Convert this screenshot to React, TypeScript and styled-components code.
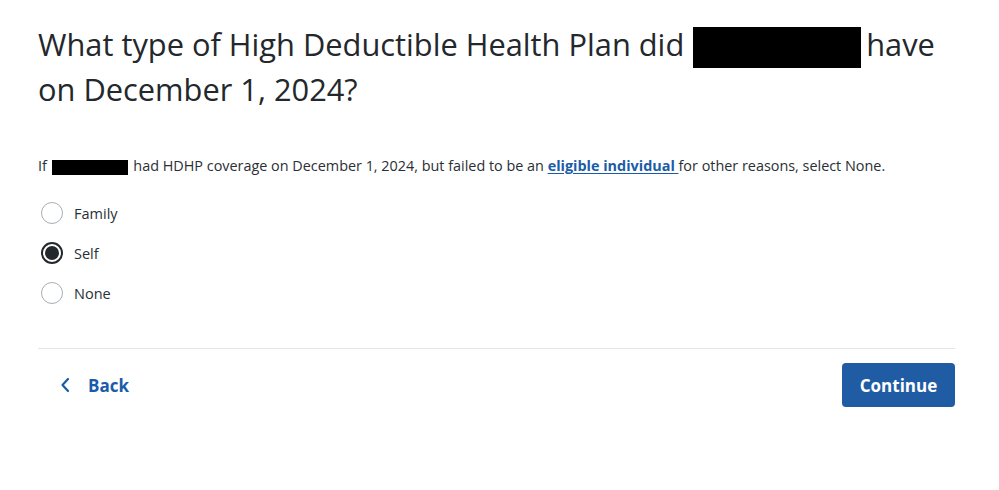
import styled, { createGlobalStyle } from "styled-components";

const GlobalStyle = createGlobalStyle`
  html, body {
    margin: 0;
    padding: 0;
    background: #ffffff;
  }
  body {
    font-family: "Open Sans", "Noto Sans", "Liberation Sans", sans-serif;
    color: #23282d;
  }
`;

const Page = styled.main`
  width: 999px;
  box-sizing: border-box;
  padding: 23px 44px 0 38px;
`;

const Title = styled.h1`
  margin: 0;
  font-size: 30.8px;
  font-weight: 400;
  line-height: 42px;
  color: #23282d;
`;

const Redact = styled.span<{ $w: number; $h: number; $inline?: boolean }>`
  display: inline-block;
  width: ${(p) => p.$w}px;
  height: ${(p) => p.$h}px;
  background: #000;
  vertical-align: middle;
  margin: ${(p) => (p.$inline ? "0 2px 0 1px" : "0 5px 0 9px")};
`;

const Intro = styled.p`
  margin: 46px 0 0;
  font-size: 14.4px;
  line-height: 20px;
  color: #2a2f35;

  a {
    color: #1a5ca8;
    font-weight: 700;
    text-decoration: underline;
    text-underline-offset: 2px;
  }
`;

const RadioList = styled.div`
  display: flex;
  flex-direction: column;
  gap: 18px;
  margin-top: 26px;
  padding-left: 3px;
`;

const RadioRow = styled.label`
  display: flex;
  align-items: center;
  gap: 11px;
  font-size: 14.5px;
  color: #2a2f35;
  height: 22px;
`;

const Circle = styled.span<{ $checked?: boolean }>`
  width: 22px;
  height: 22px;
  box-sizing: border-box;
  border-radius: 50%;
  border: ${(p) => (p.$checked ? "2px solid #23282d" : "1px solid #a9afb5")};
  display: flex;
  align-items: center;
  justify-content: center;
  &::after {
    content: "";
    display: ${(p) => (p.$checked ? "block" : "none")};
    width: 14px;
    height: 14px;
    border-radius: 50%;
    background: #23282d;
  }
`;

const Divider = styled.hr`
  border: none;
  border-top: 1px solid #e3e6ea;
  margin: 44px 0 0;
`;

const Footer = styled.div`
  display: flex;
  justify-content: space-between;
  align-items: center;
  margin-top: 14px;
`;

const BackButton = styled.button`
  display: flex;
  align-items: center;
  gap: 18px;
  background: none;
  border: none;
  padding: 0 0 0 22px;
  font-family: inherit;
  font-size: 17px;
  font-weight: 700;
  color: #1a5ca8;
  cursor: pointer;
`;

const PrimaryButton = styled.button`
  width: 113px;
  height: 44px;
  border: none;
  border-radius: 4px;
  background: #1f5ca3;
  color: #fff;
  font-family: inherit;
  font-size: 17px;
  font-weight: 700;
  cursor: pointer;
`;

const options = [
  { label: "Family", checked: false },
  { label: "Self", checked: true },
  { label: "None", checked: false },
];

export default function App() {
  return (
    <>
      <GlobalStyle />
      <Page>
        <Title>
          What type of High Deductible Health Plan did
          <Redact $w={168} $h={41} />
          have on December 1, 2024?
        </Title>
        <Intro>
          If <Redact $w={76} $h={15} $inline /> had HDHP coverage on December 1, 2024, but failed to be an{" "}
          <a href="#">eligible individual </a> for other reasons, select None.
        </Intro>
        <RadioList>
          {options.map((o) => (
            <RadioRow key={o.label}>
              <Circle $checked={o.checked} />
              {o.label}
            </RadioRow>
          ))}
        </RadioList>
        <Divider />
        <Footer>
          <BackButton>
            <svg width="10" height="16" viewBox="0 0 10 16" fill="none">
              <path d="M8 2L2.5 8L8 14" stroke="#1a5ca8" strokeWidth="2.2" strokeLinecap="round" strokeLinejoin="round" />
            </svg>
            Back
          </BackButton>
          <PrimaryButton>Continue</PrimaryButton>
        </Footer>
      </Page>
    </>
  );
}
